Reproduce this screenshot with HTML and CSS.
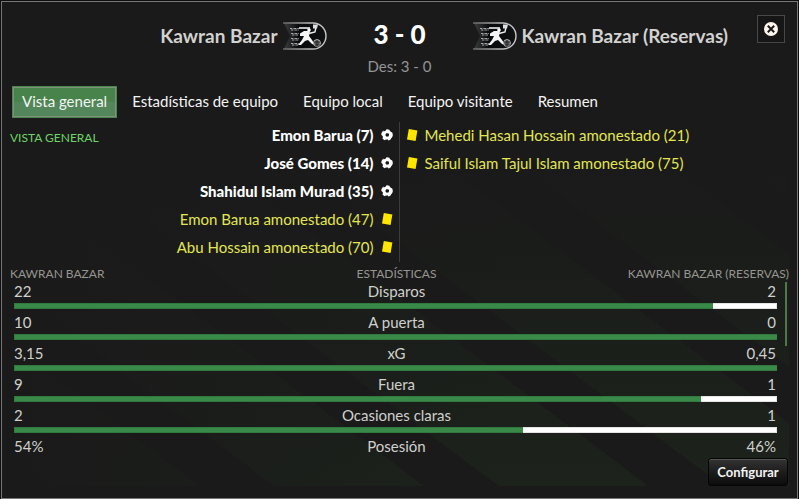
FILE: index.html
```
<!DOCTYPE html>
<html lang="es">
<head>
    <meta charset="UTF-8" />
    <meta name="viewport" content="width=device-width, initial-scale=1.0" />
    <title>Kawran Bazar 3 - 0 Kawran Bazar (Reservas)</title>
    <link rel="stylesheet" href="styles.css">
</head>
<body>
    <!-- Shared icons -->
    <svg class="sprite" aria-hidden="true">
        <defs>
            <linearGradient id="metal" x1="0" y1="0" x2="1" y2="0">
                <stop offset="0" stop-color="#666" />
                <stop offset="0.6" stop-color="#b5b5b5" />
                <stop offset="1" stop-color="#c8c8c8" />
            </linearGradient>
            <linearGradient id="shade" x1="0" y1="0" x2="1" y2="0">
                <stop offset="0" stop-color="#3c3e40" />
                <stop offset="0.35" stop-color="#08090a" />
                <stop offset="1" stop-color="#101112" />
            </linearGradient>
        </defs>
        <symbol id="crest" viewBox="0 0 44 28">
            <path d="M1 1 H30 A13 13 0 0 1 30 27 H1 L7 14 Z" fill="url(#shade)" />
            <path d="M0 1 H30 A13 13 0 0 1 30 27 H0" fill="none" stroke="url(#metal)" stroke-width="1.4" />
            <path d="M7 6.5h9M8 8h8M8 11.5h8M9 13h6M8 16.5h8M9 18h7M8 21.5h8M9 23h6" stroke="#a8a8a8" stroke-width="1.1" stroke-dasharray="2 .6 1 .5" fill="none" />
            <path d="M16 6 H27" stroke="#eee" stroke-width="1.6" />
            <circle cx="26" cy="8" r="1.8" fill="#fff" />
            <path d="M21 9 L27 9 L26 14 L29 18 L32 23 L29 22 L25 18 L22 19 L18 23 L15 23 L19 18 L21 14 L17 14 L17 11.5 Z" fill="#f4f4f4" />
            <path d="M26 11.5 L32 10 L33 5" stroke="#eee" stroke-width="1.4" fill="none" />
            <path d="M30 2.5h5l-1 4h-4z" fill="#ddd" />
            <circle cx="34" cy="21" r="3.4" fill="#555" stroke="#bbb" stroke-width="1" />
            <path d="M31 20h6M32 23h5M34 18v7" stroke="#222" stroke-width=".8" />
        </symbol>
        <symbol id="ball" viewBox="0 0 12 12">
            <circle cx="6" cy="6" r="5.8" fill="#fff" />
            <path d="M5.6 4 L8 4.8 L7.9 7.2 L5.6 7.8 L4.2 5.9 Z" fill="#1a1a1a" />
            <path d="M2.2 0 L5.4 0 L4.6 1.8 L2.6 2.6 Z M9 0 L12 3.6 L10 3 L8.6 1.4 Z M12 7.4 L10.4 9 L9.8 11.2 L12 11.2 Z M3.6 12 L4.6 10.4 L7 10.6 L7.4 12 Z M0 5.8 L1.7 7 L1.9 9 L0 9.6 Z" fill="#1a1a1a" />
        </symbol>
        <symbol id="card" viewBox="0 0 12 12">
            <path d="M2.8 0 L11.4 1.6 L9.6 12 L1 10.4 Z" fill="#ffe600" />
        </symbol>
    </svg>

    <main class="match">
        <button class="close" type="button" aria-label="Cerrar">
            <svg viewBox="0 0 14 14">
                <circle cx="7" cy="7" r="7" fill="#fff6ee" />
                <path d="M3.8 3.8 L10.2 10.2 M10.2 3.8 L3.8 10.2" stroke="#1a1a1a" stroke-width="2" />
            </svg>
        </button>

        <header class="scoreboard">
            <div class="team home">
                <h2>Kawran Bazar</h2>
                <svg class="crest"><use href="#crest" /></svg>
            </div>
            <div class="result">
                <div class="score">3 - 0</div>
                <div class="half">Des: 3 - 0</div>
            </div>
            <div class="team away">
                <svg class="crest"><use href="#crest" /></svg>
                <h2>Kawran Bazar (Reservas)</h2>
            </div>
        </header>

        <nav class="tabs">
            <a class="tab active" href="#general">Vista general</a>
            <a class="tab" href="#estadisticas">Estadísticas de equipo</a>
            <a class="tab" href="#local">Equipo local</a>
            <a class="tab" href="#visitante">Equipo visitante</a>
            <a class="tab" href="#resumen">Resumen</a>
        </nav>

        <div class="content" id="general">
            <section class="events">
                <h3 class="events-title">Vista general</h3>
                <ul class="event-list home">
                    <li class="goal">Emon Barua (7)<svg class="icon"><use href="#ball" /></svg></li>
                    <li class="goal">José Gomes (14)<svg class="icon"><use href="#ball" /></svg></li>
                    <li class="goal">Shahidul Islam Murad (35)<svg class="icon"><use href="#ball" /></svg></li>
                    <li class="booking">Emon Barua amonestado (47)<svg class="icon"><use href="#card" /></svg></li>
                    <li class="booking">Abu Hossain amonestado (70)<svg class="icon"><use href="#card" /></svg></li>
                </ul>
                <ul class="event-list away">
                    <li class="booking"><svg class="icon"><use href="#card" /></svg>Mehedi Hasan Hossain amonestado (21)</li>
                    <li class="booking"><svg class="icon"><use href="#card" /></svg>Saiful Islam Tajul Islam amonestado (75)</li>
                </ul>
            </section>

            <section class="stats">
                <table>
                    <thead>
                        <tr><th>Kawran Bazar</th><th>Estadísticas</th><th>Kawran Bazar (Reservas)</th></tr>
                    </thead>
                    <tbody>
                        <tr><td>22</td><td>Disparos</td><td>2</td></tr>
                        <tr class="bar-row"><td colspan="3"><div class="bar"><div class="fill" style="width: 91.67%"></div></div></td></tr>
                        <tr><td>10</td><td>A puerta</td><td>0</td></tr>
                        <tr class="bar-row"><td colspan="3"><div class="bar"><div class="fill" style="width: 100%"></div></div></td></tr>
                        <tr><td>3,15</td><td>xG</td><td>0,45</td></tr>
                        <tr class="bar-row"><td colspan="3"><div class="bar"><div class="fill" style="width: 100%"></div></div></td></tr>
                        <tr><td>9</td><td>Fuera</td><td>1</td></tr>
                        <tr class="bar-row"><td colspan="3"><div class="bar"><div class="fill" style="width: 90%"></div></div></td></tr>
                        <tr><td>2</td><td>Ocasiones claras</td><td>1</td></tr>
                        <tr class="bar-row"><td colspan="3"><div class="bar"><div class="fill" style="width: 66.67%"></div></div></td></tr>
                        <tr><td>54%</td><td>Posesión</td><td>46%</td></tr>
                    </tbody>
                </table>
                <div class="scrollbar"></div>
            </section>

            <footer class="actions">
                <button class="configure" type="button">Configurar</button>
            </footer>
        </div>
    </main>
</body>
</html>
```
FILE: styles.css
```
* {
    box-sizing: border-box;
}

body {
    margin: 0;
    padding: 1px;
    min-height: 100vh;
    display: flex;
    background-color: #0e0e0e;
    color: #d0d0cc;
    font-family: Lato, sans-serif;
    font-size: 15px;
    line-height: 20px;
}

h2,
h3,
ul {
    margin: 0;
    padding: 0;
}

.sprite {
    position: absolute;
    width: 0;
    height: 0;
}

/* Match window */
.match {
    position: relative;
    flex: 1;
    display: flex;
    flex-direction: column;
    padding: 16px 8px 12px;
    background-color: #1a1a1a;
    border: 1px solid #767676;
}

.close {
    position: absolute;
    top: 13px;
    right: 12px;
    width: 28px;
    height: 28px;
    padding: 6px;
    background-color: #161616;
    border: 1px solid #484848;
}

.close svg {
    display: block;
    width: 14px;
    height: 14px;
}

/* Scoreboard */
.scoreboard {
    display: grid;
    grid-template-columns: 1fr 146px 1fr;
    height: 68px;
}

.team {
    display: flex;
    align-items: center;
    gap: 5px;
    height: 36px;
}

.team.home {
    justify-content: flex-end;
}

.team h2 {
    font-size: 19px;
    font-weight: bold;
    color: #d2d2d0;
    white-space: nowrap;
}

.crest {
    width: 44px;
    height: 28px;
}

.result {
    text-align: center;
}

.score {
    font-size: 26px;
    font-weight: 900;
    line-height: 32px;
    color: #fff;
}

.half {
    margin-top: 6px;
    color: #949494;
}

/* Tabs */
.tabs {
    display: flex;
    gap: 5px;
    padding-left: 2px;
}

.tab {
    padding: 5px 10px 7px;
    color: #f4f4f4;
    text-decoration: none;
    white-space: nowrap;
}

.tab.active {
    background: linear-gradient(#47834a 50%, #53865a 50%);
    box-shadow: inset 0 0 0 1px #4b8650, inset 0 0 0 2px #7d917c;
}

/* Faint diagonal stripes behind the lower panels */
.content {
    flex: 1;
    display: flex;
    flex-direction: column;
    padding-top: 4px;
    background:
        linear-gradient(to bottom, #1a1a1a 12%, transparent),
        linear-gradient(to right, #1a1a1a, transparent 65%),
        repeating-linear-gradient(37deg, #1a1a1a 0 24px, #1c231b 24px 114px, #1a1a1a 114px 135px);
}

/* Events */
.events {
    position: relative;
    display: grid;
    grid-template-columns: 1fr 1fr;
    min-height: 140px;
}

.events-title {
    position: absolute;
    top: 6px;
    left: 0;
    font-size: 12px;
    font-weight: normal;
    text-transform: uppercase;
    color: #6fd466;
}

.event-list {
    list-style: none;
}

.event-list li {
    display: flex;
    align-items: center;
    gap: 7px;
    height: 28px;
    padding: 0 6px 2px;
    white-space: nowrap;
}

.event-list.home {
    border-right: 1px solid #3c3c3c;
}

.event-list.home li {
    justify-content: flex-end;
}

.goal {
    font-weight: 900;
    color: #fff;
}

.booking {
    color: #e3e650;
}

.icon {
    width: 12px;
    height: 12px;
}

/* Stats */
.stats {
    position: relative;
    margin-top: 3px;
}

table {
    width: 100%;
    table-layout: fixed;
    border-collapse: collapse;
}

th {
    height: 17px;
    padding: 0;
    font-size: 12px;
    line-height: 16px;
    font-weight: normal;
    text-transform: uppercase;
    text-align: left;
    white-space: nowrap;
    color: #969690;
}

td {
    height: 21px;
    padding: 0 0 2px 4px;
    line-height: 19px;
}

th:nth-child(2),
td:nth-child(2) {
    padding-left: 0;
    padding-right: 6px;
    text-align: center;
}

th:nth-child(3),
td:nth-child(3) {
    text-align: right;
}

td:nth-child(3) {
    padding-right: 13px;
}

.bar-row td {
    height: 10px;
    padding: 0 12px 4px 4px;
    line-height: 0;
}

.bar {
    height: 6px;
    background-color: #fff;
    box-shadow: inset 0 0 0 1px #e4e4e4;
}

.fill {
    height: 6px;
    background-color: #398a48;
    border: 1px solid #31793e;
    border-right: 0;
}

.scrollbar {
    position: absolute;
    top: 17px;
    right: 2px;
    width: 2px;
    height: 64px;
    background-color: #4b7a45;
}

/* Bottom actions */
.actions {
    display: flex;
    justify-content: flex-end;
    padding-right: 1px;
}

.configure {
    width: 80px;
    height: 28px;
    padding: 0;
    border: 1px solid #050505;
    border-radius: 3px;
    background: linear-gradient(#333, #1d1d1d 50%, #0c0c0c);
    box-shadow: inset 0 1px 0 #555;
    color: #f2f2f2;
    font-family: inherit;
    font-size: 13px;
    font-weight: bold;
}
```
